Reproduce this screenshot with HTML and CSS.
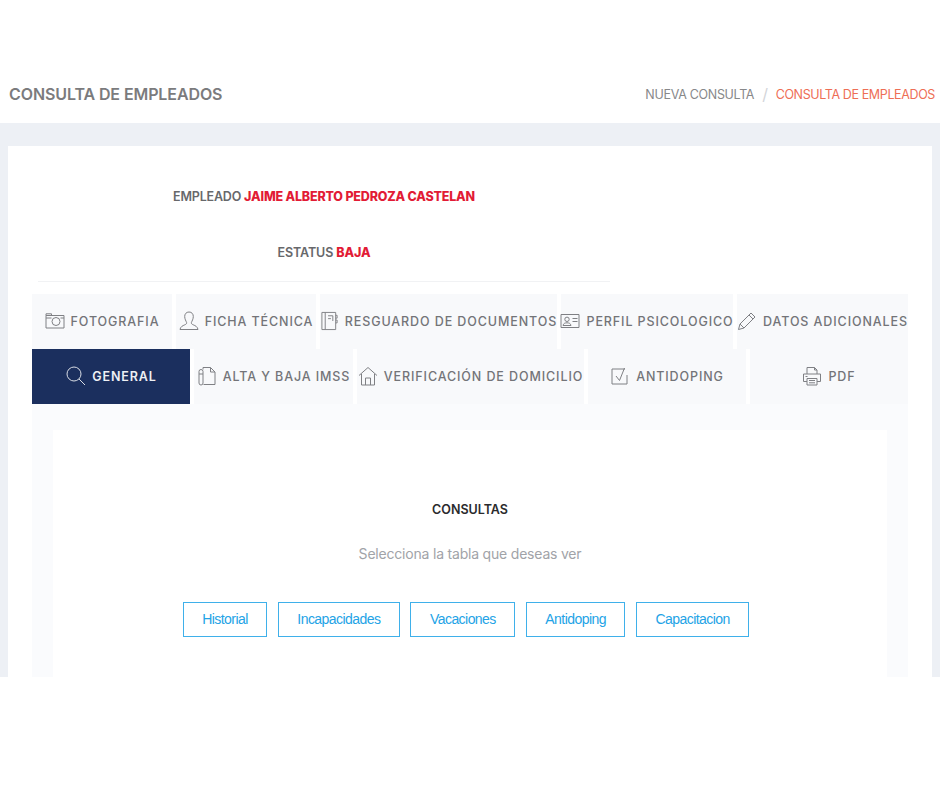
FILE: index.html

```html
<!DOCTYPE html>
<html lang="es">
<head>
  <meta charset="UTF-8">
  <title>Consulta de empleados</title>
  <link rel="stylesheet" href="styles.css">
</head>
<body>
  <div class="page">
    <header class="top-bar">
      <h1>CONSULTA DE EMPLEADOS</h1>
      <nav class="breadcrumb">
        <span>NUEVA CONSULTA</span>
        <span class="sep">/</span>
        <span class="current">CONSULTA DE EMPLEADOS</span>
      </nav>
    </header>

    <main class="content">
      <section class="card">
        <div class="employee">
          <p class="emp-name">EMPLEADO <strong>JAIME ALBERTO PEDROZA CASTELAN</strong></p>
          <p class="emp-status">ESTATUS <strong>BAJA</strong></p>
        </div>

        <div class="tabs tabs-first">
          <a class="tab">
            <svg class="icon" viewBox="0 0 20 20"><path d="M1 4.500h18v12.500H1zM1 4.500V2.800h5.500v1.700"/><circle cx="11" cy="10.500" r="4"/><path d="M1 7h5.500M15.500 7H19"/></svg>
            FOTOGRAFIA
          </a>
          <a class="tab">
            <svg class="icon" viewBox="0 0 20 20"><path d="M10 1c-2.800 0-4.300 2-4.300 4.500S7 10 7.600 11.500c.3 1-.5 1.800-1.800 2.300C3.500 14.800 1.500 15.700 1 18.500h18c-.5-2.800-2.500-3.700-4.800-4.700-1.300-.5-2.100-1.300-1.800-2.300.6-1.500 1.900-3.500 1.900-6S12.800 1 10 1z"/></svg>
            FICHA TÉCNICA
          </a>
          <a class="tab">
            <svg class="icon icon-tall" viewBox="0 0 20 20"><path d="M2 1h14.500v18H2zM5.500 1v18M8.500 4.500h5v5.500M8.500 7.500h3M16.500 4h1.500v3h-1.500M16.500 9h1.500v3h-1.500"/></svg>
            RESGUARDO DE DOCUMENTOS
          </a>
          <a class="tab">
            <svg class="icon" viewBox="0 0 20 20"><path d="M1 3.500h18v13H1z"/><circle cx="7" cy="8.300" r="2.200"/><path d="M3 14.500c.3-2 2-2.700 4-2.700s3.700.7 4 2.700zM12.500 7.500h5M12.500 10.500h5"/></svg>
            PERFIL PSICOLOGICO
          </a>
          <a class="tab">
            <svg class="icon" viewBox="0 0 20 20"><path d="M14 2l4 4L7 17l-5.500 1.500L3 13zM12 4l4 4M3 13l4 4"/></svg>
            DATOS ADICIONALES
          </a>
        </div>

        <div class="tabs tabs-second">
          <a class="tab active">
            <svg class="icon" viewBox="0 0 20 20"><circle cx="9" cy="8" r="7"/><path d="M14 13l6 6"/></svg>
            GENERAL
          </a>
          <a class="tab">
            <svg class="icon" viewBox="0 0 20 20"><path d="M6 3.500V1.500h7.500L18 6v12.500H6.500M13.500 1.500V6H18"/><path d="M2 5.500a2 2 0 0 1 4 0V17a2 2 0 0 1-4 0zM2 8h4"/></svg>
            ALTA Y BAJA IMSS
          </a>
          <a class="tab">
            <svg class="icon" viewBox="0 0 20 20"><path d="M1 9.500L10 1.500l9 8M3.500 8v11h13V8M7.500 19v-7h5v7"/></svg>
            VERIFICACIÓN DE DOMICILIO
          </a>
          <a class="tab">
            <svg class="icon" viewBox="0 0 20 20"><path d="M17 9v9H2V3h13"/><path d="M6 10l3.500 4.500L14.500 2"/></svg>
            ANTIDOPING
          </a>
          <a class="tab">
            <svg class="icon" viewBox="0 0 20 20"><path d="M5 8V1.500h7.500L15 4v4M12.500 1.500V4H15"/><path d="M5 15.500H1.500V8h17v7.500H15"/><path d="M5 12.500h10v6.500H5zM7 14.500h6M7 16.800h6M3.500 10.500h2"/></svg>
            PDF
          </a>
        </div>

        <div class="panel">
          <div class="panel-inner">
            <h2>CONSULTAS</h2>
            <p class="hint">Selecciona la tabla que deseas ver</p>
            <div class="buttons">
              <button class="btn">Historial</button>
              <button class="btn">Incapacidades</button>
              <button class="btn">Vacaciones</button>
              <button class="btn">Antidoping</button>
              <button class="btn">Capacitacion</button>
            </div>
          </div>
        </div>
      </section>
    </main>
  </div>
</body>
</html>
```

FILE: styles.css

```css
* {
  margin: 0;
  padding: 0;
  box-sizing: border-box;
}

body {
  background-color: #fff;
  font-family: "Inter", "Liberation Sans", sans-serif;
  color: #6c6d70;
}

.page {
  height: 788px;
}

.top-bar {
  height: 123px;
  padding: 71px 5px 6px 9px;
  display: flex;
  align-items: center;
  justify-content: space-between;
  background-color: #fff;
}

.top-bar h1 {
  font-size: 16px;
  font-weight: 600;
  color: #7b7b7d;
  letter-spacing: -0.1px;
}

.breadcrumb {
  display: flex;
  align-items: center;
  gap: 8px;
  font-size: 12.500px;
  color: #87888a;
  letter-spacing: -0.3px;
}

.breadcrumb .sep {
  color: #d3d5d9;
  font-size: 16px;
}

.breadcrumb .current {
  color: #ee6e55;
  letter-spacing: -0.37px;
}

.content {
  height: 554px;
  padding: 23px 8px 0;
  background-color: #edf0f5;
  overflow: hidden;
}

.card {
  height: 531px;
  padding: 0 24px;
  background-color: #fff;
}

.employee {
  width: 572px;
  height: 136px;
  margin-left: 6px;
  padding-top: 42px;
  border-bottom: 1px solid #f1f2f4;
  text-align: center;
  font-size: 12.500px;
  font-weight: 600;
  color: #67686b;
}

.employee strong {
  font-weight: 800;
  color: #e21b35;
}

.emp-name {
  letter-spacing: -0.18px;
  line-height: 18px;
}

.emp-status {
  margin-top: 38px;
  letter-spacing: -0.12px;
  line-height: 18px;
}

.tabs {
  display: grid;
  column-gap: 4px;
  height: 55px;
}

.tabs-first {
  margin-top: 12px;
  grid-template-columns: 140px 140px 237px 172px 171px;
}

.tabs-second {
  grid-template-columns: 158px 159px 227px 158px 158px;
}

.tab {
  display: flex;
  align-items: center;
  justify-content: center;
  gap: 6px;
  padding-bottom: 1px;
  background-color: #f8f9fb;
  font-size: 12.500px;
  font-weight: 500;
  letter-spacing: 0.9px;
  color: #737478;
  white-space: nowrap;
}

.tab.active {
  background-color: #1b2f5e;
  color: #eef0f4;
  font-weight: 600;
  gap: 7px;
}

.icon {
  width: 20px;
  height: 20px;
  flex-shrink: 0;
  fill: none;
  stroke: currentColor;
  stroke-width: 1;
  opacity: 0.9;
}

.icon-tall {
  width: 19px;
}

.panel {
  height: 273px;
  padding: 26px 21px 0;
  background-color: #fafbfd;
}

.panel-inner {
  height: 247px;
  padding-top: 71px;
  background-color: #fff;
  text-align: center;
}

.panel-inner h2 {
  font-size: 12.500px;
  font-weight: 600;
  line-height: 18px;
  color: #2b2b2d;
}

.hint {
  margin-top: 26px;
  font-size: 14px;
  line-height: 18px;
  color: #a1a3a8;
  letter-spacing: -0.2px;
}

.buttons {
  margin-top: 39px;
  padding-right: 8px;
  display: flex;
  justify-content: center;
  gap: 10.500px;
}

.btn {
  height: 35px;
  padding: 0 18.500px 1px;
  background-color: #fff;
  border: 1px solid #3fb0ea;
  font-family: "Liberation Sans", Arial, sans-serif;
  font-size: 14px;
  letter-spacing: -0.55px;
  color: #23a3e6;
}
```
